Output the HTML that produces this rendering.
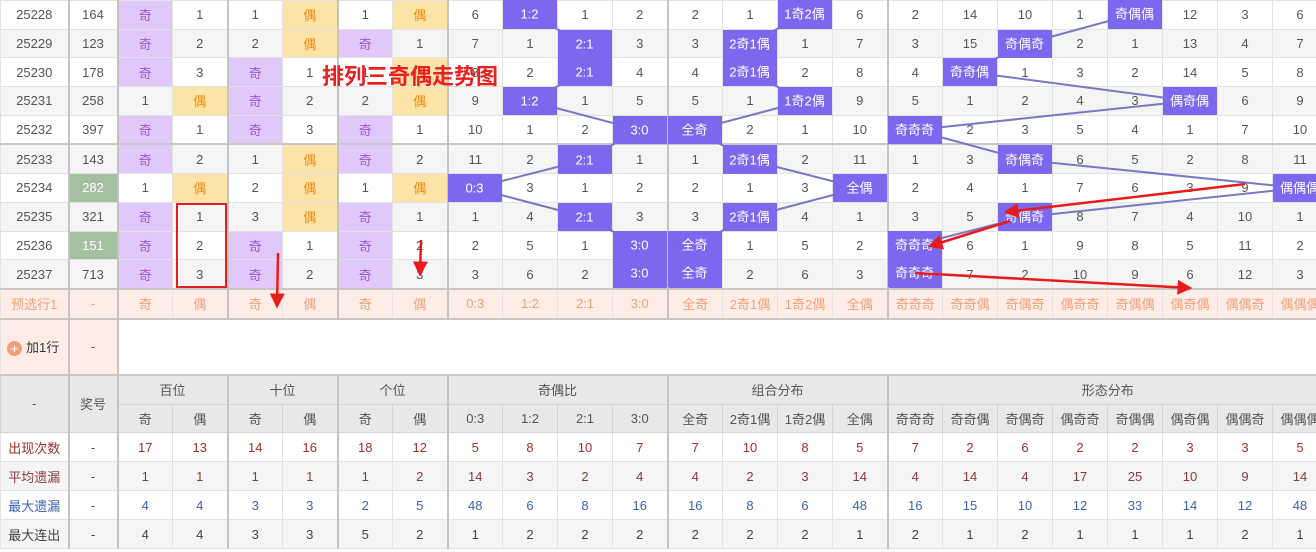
<!DOCTYPE html>
<html><head><meta charset="utf-8"><style>
body{margin:0;width:1316px;height:552px;overflow:hidden;background:#fff;font-family:"Liberation Sans","Noto Sans CJK SC",sans-serif;position:relative}
table{border-collapse:collapse;table-layout:fixed;width:1327px;position:absolute;left:0;top:0}
td{height:27.7px;padding:0;text-align:center;font-size:13px;border:1px solid #e2e2e2;color:#555;white-space:nowrap;overflow:hidden}
tr.d td:nth-child(2),tr.d td:nth-child(3),tr.d td:nth-child(5),tr.d td:nth-child(7),tr.d td:nth-child(9),tr.d td:nth-child(13),tr.d td:nth-child(17){border-left:2px solid #c4c4c4}
tr.z td{background:#f5f5f5}
td.o{background:#e0c8fa !important;color:#9a5bd0}
td.e{background:#fde4a6 !important;color:#f08a10}
td.b{background:#7b68ee !important}
td.g{background:#a5c0a0 !important;color:#fff}
tr.s5 td{border-top:2px solid #c8c8c8}
tr.p td{background:#fdede6;color:#f0a07c;border-top:2px solid #c8c8c8}
tr.h td{background:#e8e8e8;border-color:#d4d4d4}
.L{border-left:2px solid #c4c4c4 !important}
tr.r1 td,tr.r2 td,tr.r3 td,tr.r4 td{height:28px}
tr.r1 td{color:#a0302a}
tr.r2 td{color:#8b3a3a}
tr.r3 td{color:#3a64b0}
tr.r4 td{color:#444}
</style></head><body>
<table>
<colgroup><col style="width:68px"><col style="width:49px"><col span="22" style="width:55px"></colgroup>
<tr class="d"><td>25228</td><td>164</td><td class="o">奇</td><td>1</td><td>1</td><td class="e">偶</td><td>1</td><td class="e">偶</td><td>6</td><td class="b"></td><td>1</td><td>2</td><td>2</td><td>1</td><td class="b"></td><td>6</td><td>2</td><td>14</td><td>10</td><td>1</td><td class="b"></td><td>12</td><td>3</td><td>6</td></tr>
<tr class="d z"><td>25229</td><td>123</td><td class="o">奇</td><td>2</td><td>2</td><td class="e">偶</td><td class="o">奇</td><td>1</td><td>7</td><td>1</td><td class="b"></td><td>3</td><td>3</td><td class="b"></td><td>1</td><td>7</td><td>3</td><td>15</td><td class="b"></td><td>2</td><td>1</td><td>13</td><td>4</td><td>7</td></tr>
<tr class="d"><td>25230</td><td>178</td><td class="o">奇</td><td>3</td><td class="o">奇</td><td>1</td><td>1</td><td class="e">偶</td><td>8</td><td>2</td><td class="b"></td><td>4</td><td>4</td><td class="b"></td><td>2</td><td>8</td><td>4</td><td class="b"></td><td>1</td><td>3</td><td>2</td><td>14</td><td>5</td><td>8</td></tr>
<tr class="d z"><td>25231</td><td>258</td><td>1</td><td class="e">偶</td><td class="o">奇</td><td>2</td><td>2</td><td class="e">偶</td><td>9</td><td class="b"></td><td>1</td><td>5</td><td>5</td><td>1</td><td class="b"></td><td>9</td><td>5</td><td>1</td><td>2</td><td>4</td><td>3</td><td class="b"></td><td>6</td><td>9</td></tr>
<tr class="d"><td>25232</td><td>397</td><td class="o">奇</td><td>1</td><td class="o">奇</td><td>3</td><td class="o">奇</td><td>1</td><td>10</td><td>1</td><td>2</td><td class="b"></td><td class="b"></td><td>2</td><td>1</td><td>10</td><td class="b"></td><td>2</td><td>3</td><td>5</td><td>4</td><td>1</td><td>7</td><td>10</td></tr>
<tr class="d z s5"><td>25233</td><td>143</td><td class="o">奇</td><td>2</td><td>1</td><td class="e">偶</td><td class="o">奇</td><td>2</td><td>11</td><td>2</td><td class="b"></td><td>1</td><td>1</td><td class="b"></td><td>2</td><td>11</td><td>1</td><td>3</td><td class="b"></td><td>6</td><td>5</td><td>2</td><td>8</td><td>11</td></tr>
<tr class="d"><td>25234</td><td class="g">282</td><td>1</td><td class="e">偶</td><td>2</td><td class="e">偶</td><td>1</td><td class="e">偶</td><td class="b"></td><td>3</td><td>1</td><td>2</td><td>2</td><td>1</td><td>3</td><td class="b"></td><td>2</td><td>4</td><td>1</td><td>7</td><td>6</td><td>3</td><td>9</td><td class="b"></td></tr>
<tr class="d z"><td>25235</td><td>321</td><td class="o">奇</td><td>1</td><td>3</td><td class="e">偶</td><td class="o">奇</td><td>1</td><td>1</td><td>4</td><td class="b"></td><td>3</td><td>3</td><td class="b"></td><td>4</td><td>1</td><td>3</td><td>5</td><td class="b"></td><td>8</td><td>7</td><td>4</td><td>10</td><td>1</td></tr>
<tr class="d"><td>25236</td><td class="g">151</td><td class="o">奇</td><td>2</td><td class="o">奇</td><td>1</td><td class="o">奇</td><td>2</td><td>2</td><td>5</td><td>1</td><td class="b"></td><td class="b"></td><td>1</td><td>5</td><td>2</td><td class="b"></td><td>6</td><td>1</td><td>9</td><td>8</td><td>5</td><td>11</td><td>2</td></tr>
<tr class="d z"><td>25237</td><td>713</td><td class="o">奇</td><td>3</td><td class="o">奇</td><td>2</td><td class="o">奇</td><td>3</td><td>3</td><td>6</td><td>2</td><td class="b"></td><td class="b"></td><td>2</td><td>6</td><td>3</td><td class="b"></td><td>7</td><td>2</td><td>10</td><td>9</td><td>6</td><td>12</td><td>3</td></tr>
<tr class="d p"><td>预选行1</td><td>-</td><td>奇</td><td>偶</td><td>奇</td><td>偶</td><td>奇</td><td>偶</td><td>0:3</td><td>1:2</td><td>2:1</td><td>3:0</td><td>全奇</td><td>2奇1偶</td><td>1奇2偶</td><td>全偶</td><td>奇奇奇</td><td>奇奇偶</td><td>奇偶奇</td><td>偶奇奇</td><td>奇偶偶</td><td>偶奇偶</td><td>偶偶奇</td><td>偶偶偶</td></tr>
<tr><td style="height:54px;background:#fdede6;color:#333;border-top:2px solid #c8c8c8;text-align:left;padding-left:6px"><span style="display:inline-block;width:15px;height:15px;border-radius:50%;background:#f0a07c;color:#fff;font-size:13px;line-height:15px;text-align:center;vertical-align:middle;margin-right:4px">+</span>加1行</td><td class="L" style="background:#fdede6;border-top:2px solid #c8c8c8">-</td><td colspan="22" class="L" style="border-top:2px solid #c8c8c8"></td></tr>
<tr class="h"><td rowspan="2" style="border-top:2px solid #c8c8c8">-</td><td rowspan="2" class="L" style="border-top:2px solid #c8c8c8">奖号</td><td colspan="2" class="L" style="height:28px;border-top:2px solid #c8c8c8">百位</td><td colspan="2" class="L" style="border-top:2px solid #c8c8c8">十位</td><td colspan="2" class="L" style="border-top:2px solid #c8c8c8">个位</td><td colspan="4" class="L" style="border-top:2px solid #c8c8c8">奇偶比</td><td colspan="4" class="L" style="border-top:2px solid #c8c8c8">组合分布</td><td colspan="8" class="L" style="border-top:2px solid #c8c8c8">形态分布</td></tr>
<tr class="h"><td class="L">奇</td><td>偶</td><td class="L">奇</td><td>偶</td><td class="L">奇</td><td>偶</td><td class="L">0:3</td><td>1:2</td><td>2:1</td><td>3:0</td><td class="L">全奇</td><td>2奇1偶</td><td>1奇2偶</td><td>全偶</td><td class="L">奇奇奇</td><td>奇奇偶</td><td>奇偶奇</td><td>偶奇奇</td><td>奇偶偶</td><td>偶奇偶</td><td>偶偶奇</td><td>偶偶偶</td></tr>
<tr class="d r1"><td>出现次数</td><td>-</td><td>17</td><td>13</td><td>14</td><td>16</td><td>18</td><td>12</td><td>5</td><td>8</td><td>10</td><td>7</td><td>7</td><td>10</td><td>8</td><td>5</td><td>7</td><td>2</td><td>6</td><td>2</td><td>2</td><td>3</td><td>3</td><td>5</td></tr>
<tr class="d z r2"><td>平均遗漏</td><td>-</td><td>1</td><td>1</td><td>1</td><td>1</td><td>1</td><td>2</td><td>14</td><td>3</td><td>2</td><td>4</td><td>4</td><td>2</td><td>3</td><td>14</td><td>4</td><td>14</td><td>4</td><td>17</td><td>25</td><td>10</td><td>9</td><td>14</td></tr>
<tr class="d r3"><td>最大遗漏</td><td>-</td><td>4</td><td>4</td><td>3</td><td>3</td><td>2</td><td>5</td><td>48</td><td>6</td><td>8</td><td>16</td><td>16</td><td>8</td><td>6</td><td>48</td><td>16</td><td>15</td><td>10</td><td>12</td><td>33</td><td>14</td><td>12</td><td>48</td></tr>
<tr class="d z r4"><td>最大连出</td><td>-</td><td>4</td><td>4</td><td>3</td><td>3</td><td>5</td><td>2</td><td>1</td><td>2</td><td>2</td><td>2</td><td>2</td><td>2</td><td>2</td><td>1</td><td>2</td><td>1</td><td>2</td><td>1</td><td>1</td><td>1</td><td>2</td><td>1</td></tr>
</table>
<svg width="1316" height="320" style="position:absolute;left:0;top:0" font-family="Liberation Sans,Noto Sans CJK SC,sans-serif">
<defs><marker id="a" markerWidth="6" markerHeight="6" refX="5" refY="3" orient="auto"><path d="M0,0 L6,3 L0,6 z" fill="#e81c1c"/></marker></defs>
<g fill="none" stroke="#7a78c4" stroke-width="2">
<polyline points="529.5,14 584.5,44 584.5,72 529.5,101 639.5,130 584.5,160 474.5,188 584.5,217 639.5,245 639.5,273"/>
<polyline points="804.5,14 749.5,44 749.5,72 804.5,101 694.5,130 749.5,160 859.5,188 749.5,217 694.5,245 694.5,273"/>
<polyline points="1134.5,14 1024.5,44 969.5,72 1189.5,101 914.5,130 1024.5,160 1299.5,188 1024.5,217 914.5,245 914.5,273"/>
</g>
<g fill="#7b68ee">
<rect x="503" y="0" width="54" height="28"/><rect x="558" y="30" width="54" height="28"/><rect x="558" y="58" width="54" height="28"/><rect x="503" y="87" width="54" height="28"/><rect x="613" y="116" width="54" height="28"/><rect x="558" y="146" width="54" height="28"/><rect x="448" y="174" width="54" height="28"/><rect x="558" y="203" width="54" height="28"/><rect x="613" y="231" width="54" height="28"/><rect x="613" y="259" width="54" height="28"/>
<rect x="778" y="0" width="54" height="28"/><rect x="723" y="30" width="54" height="28"/><rect x="723" y="58" width="54" height="28"/><rect x="778" y="87" width="54" height="28"/><rect x="668" y="116" width="54" height="28"/><rect x="723" y="146" width="54" height="28"/><rect x="833" y="174" width="54" height="28"/><rect x="723" y="203" width="54" height="28"/><rect x="668" y="231" width="54" height="28"/><rect x="668" y="259" width="54" height="28"/>
<rect x="1108" y="0" width="54" height="28"/><rect x="998" y="30" width="54" height="28"/><rect x="943" y="58" width="54" height="28"/><rect x="1163" y="87" width="54" height="28"/><rect x="888" y="116" width="54" height="28"/><rect x="998" y="146" width="54" height="28"/><rect x="1273" y="174" width="54" height="28"/><rect x="998" y="203" width="54" height="28"/><rect x="888" y="231" width="54" height="28"/><rect x="888" y="259" width="54" height="28"/>
</g>
<g fill="#fff" font-size="13" text-anchor="middle">
<text x="529.5" y="18.5">1:2</text><text x="584.5" y="48.5">2:1</text><text x="584.5" y="76.5">2:1</text><text x="529.5" y="105.5">1:2</text><text x="639.5" y="134.5">3:0</text><text x="584.5" y="164.5">2:1</text><text x="474.5" y="192.5">0:3</text><text x="584.5" y="221.5">2:1</text><text x="639.5" y="249.5">3:0</text><text x="639.5" y="277.5">3:0</text>
<text x="804.5" y="18.5">1奇2偶</text><text x="749.5" y="48.5">2奇1偶</text><text x="749.5" y="76.5">2奇1偶</text><text x="804.5" y="105.5">1奇2偶</text><text x="694.5" y="134.5">全奇</text><text x="749.5" y="164.5">2奇1偶</text><text x="859.5" y="192.5">全偶</text><text x="749.5" y="221.5">2奇1偶</text><text x="694.5" y="249.5">全奇</text><text x="694.5" y="277.5">全奇</text>
<text x="1134.5" y="18.5">奇偶偶</text><text x="1024.5" y="48.5">奇偶奇</text><text x="969.5" y="76.5">奇奇偶</text><text x="1189.5" y="105.5">偶奇偶</text><text x="914.5" y="134.5">奇奇奇</text><text x="1024.5" y="164.5">奇偶奇</text><text x="1299.5" y="192.5">偶偶偶</text><text x="1024.5" y="221.5">奇偶奇</text><text x="914.5" y="249.5">奇奇奇</text><text x="914.5" y="277.5">奇奇奇</text>
</g>
<text x="322" y="84" font-size="22" font-weight="bold" fill="#e82020">排列三奇偶走势图</text>
<rect x="177" y="204" width="49" height="83" fill="none" stroke="#e02020" stroke-width="2"/>
<g stroke="#e81c1c" stroke-width="2.5" fill="none" marker-end="url(#a)">
<line x1="278" y1="253" x2="277" y2="306"/>
<line x1="421" y1="240" x2="420" y2="274"/>
<line x1="1245" y1="184" x2="1006" y2="212"/>
<line x1="1010" y1="221" x2="930" y2="246"/>
<line x1="915" y1="273" x2="1190" y2="288"/>
</g>
</svg>
</body></html>
